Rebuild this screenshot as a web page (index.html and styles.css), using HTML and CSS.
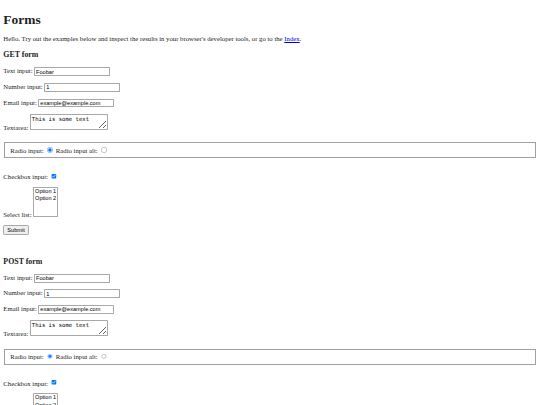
FILE: index.html
```html
<!DOCTYPE html>
<html lang="en">
<head>
  <meta charset="UTF-8" />
  <title>Forms</title>
  <link rel="stylesheet" href="styles.css">
</head>
<body>
  <h1>Forms</h1>
  <p>Hello. Try out the examples below and inspect the results in your browser's developer tools, or go to the <a href="#">Index</a>.</p>

  <h3>GET form</h3>
  <form method="get">
    <p><label for="get-text">Text input:</label> <input type="text" id="get-text" value="Foobar"></p>
    <p><label for="get-number">Number input:</label> <input type="number" id="get-number" value="1"></p>
    <p><label for="get-email">Email input:</label> <input type="email" id="get-email" value="example@example.com"></p>
    <p><label for="get-textarea">Textarea:</label> <textarea id="get-textarea">This is some text</textarea></p>
    <fieldset class="radio-group">
      <label for="get-radio">Radio input:</label> <input type="radio" name="get-radio" id="get-radio" checked>
      <label for="get-radio-alt">Radio input alt:</label> <input type="radio" name="get-radio" id="get-radio-alt">
    </fieldset>
    <p><label for="get-check">Checkbox input:</label> <input type="checkbox" id="get-check" checked></p>
    <p class="select-row"><label for="get-select">Select list:</label> <select id="get-select" multiple><option>Option 1</option><option>Option 2</option></select></p>
    <button type="submit">Submit</button>
  </form>

  <h3>POST form</h3>
  <form method="post">
    <p><label for="post-text">Text input:</label> <input type="text" id="post-text" value="Foobar"></p>
    <p><label for="post-number">Number input:</label> <input type="number" id="post-number" value="1"></p>
    <p><label for="post-email">Email input:</label> <input type="email" id="post-email" value="example@example.com"></p>
    <p><label for="post-textarea">Textarea:</label> <textarea id="post-textarea">This is some text</textarea></p>
    <fieldset class="radio-group">
      <label for="post-radio">Radio input:</label> <input type="radio" name="post-radio" id="post-radio" checked>
      <label for="post-radio-alt">Radio input alt:</label> <input type="radio" name="post-radio" id="post-radio-alt">
    </fieldset>
    <p><label for="post-check">Checkbox input:</label> <input type="checkbox" id="post-check" checked></p>
    <p class="select-row"><label for="post-select">Select list:</label> <select id="post-select" multiple><option>Option 1</option><option>Option 2</option></select></p>
    <button type="submit">Submit</button>
  </form>
</body>
</html>
```

FILE: styles.css
```css
html {
  zoom: 0.42;
}

body {
  font-family: "Liberation Serif", serif;
  color: #222;
}

h1 {
  margin-bottom: 10px;
}

h3 {
  margin-top: 20px;
  margin-bottom: 19px;
}

form {
  margin-bottom: 53px;
}

input, textarea, select {
  border: 1px solid #a8a8a8;
  border-radius: 2px;
}

textarea {
  width: 176px;
}

button {
  border: 1px solid #a8a8a8;
  border-radius: 3px;
  background: #efefef;
  padding: 2px 7px;
}

.radio-group {
  margin-top: 28px;
  margin-bottom: 33px;
  padding: 6px 12px 9px;
  border: 2px solid #a0a0a0;
}

.select-row {
  margin-bottom: 18px;
}
```
